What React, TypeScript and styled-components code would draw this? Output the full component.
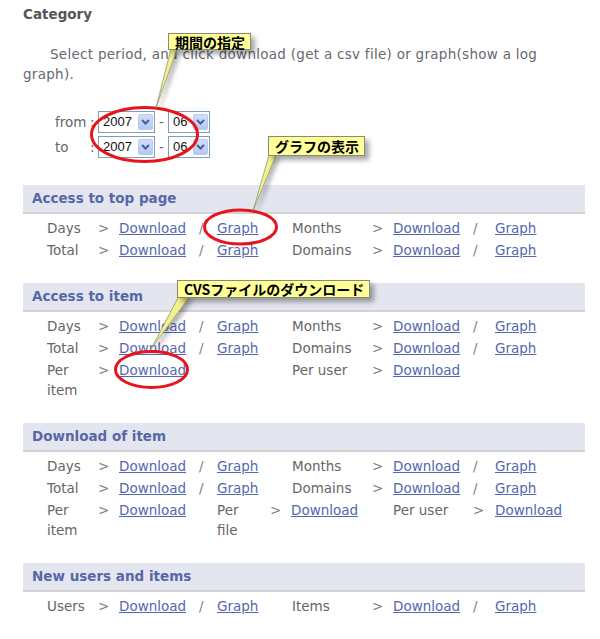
import React from "react";
import styled, { createGlobalStyle } from "styled-components";

const GlobalStyle = createGlobalStyle`
  html, body { margin: 0; padding: 0; background: #fff; }
  body { font-family: "DejaVu Sans", Verdana, sans-serif; }
`;

const Page = styled.div`
  position: relative;
  width: 600px;
  height: 639px;
  overflow: hidden;
  box-sizing: border-box;
  padding: 4px 15px 0 23px;
  font-family: "DejaVu Sans", Verdana, sans-serif;
  font-size: 13.5px;
  color: #666;
`;

const Title = styled.h2`
  margin: 0;
  font-size: 13.5px;
  line-height: 20px;
  font-weight: bold;
  color: #555;
`;

const Intro = styled.p`
  margin: 20px 0 0;
  line-height: 20px;
  text-indent: 27px;
  letter-spacing: 0.28px;
  color: #686870;
`;

const PeriodForm = styled.div`
  margin-top: 25px;
  padding-left: 32px;
  display: flex;
  flex-direction: column;
`;

const PeriodRow = styled.div`
  display: flex;
  align-items: center;
  height: 25px;
`;

const PeriodLabel = styled.span`
  width: 35px;
  color: #666;
`;

const Colon = styled.span`
  width: 8px;
  color: #666;
`;

const Dash = styled.span`
  width: 13px;
  text-align: center;
  color: #666;
`;

const SelectBox = styled.div<{ $w: number }>`
  display: inline-flex;
  align-items: center;
  justify-content: space-between;
  width: ${(p) => p.$w}px;
  height: 22px;
  box-sizing: border-box;
  border: 1px solid #7f9db9;
  background: #fff;
  padding: 0 1px 0 4px;
  font-family: "Liberation Sans", Arial, sans-serif;
  font-size: 13px;
  color: #111;
`;

const DropButton = styled.span`
  display: inline-flex;
  align-items: center;
  justify-content: center;
  width: 15px;
  height: 16px;
  box-sizing: border-box;
  border: 1px solid #b6c9f3;
  border-radius: 2px;
  background: linear-gradient(#d0defd, #b3c8f6);
`;

const Section = styled.section<{ $first?: boolean }>`
  margin-top: ${(p) => (p.$first ? 26 : 22)}px;
`;

const SectionHeader = styled.h3`
  margin: 0;
  height: 27px;
  line-height: 27px;
  padding-left: 9px;
  background: #e3e6ee;
  border-bottom: 2px solid #d2d2d6;
  font-size: 13.5px;
  font-weight: bold;
  color: #5767a8;
`;

const Rows = styled.div`
  padding: 3px 0 0 24px;
`;

const Row = styled.div<{ $cols: string }>`
  display: grid;
  grid-template-columns: ${(p) => p.$cols};
  line-height: 20px;
  padding: 1px 0;
`;

const Label = styled.span<{ $pr?: number }>`
  color: #666;
  padding-right: ${(p) => p.$pr ?? 0}px;
`;

const Sep = styled.span`
  color: #808080;
`;

const Link = styled.a`
  color: #5467b0;
  text-decoration: underline;
  justify-self: start;
  cursor: pointer;
`;

const Overlay = styled.svg`
  position: absolute;
  left: 0;
  top: 0;
  pointer-events: none;
`;

const Callout = styled.div<{ $x: number; $y: number; $h: number }>`
  position: absolute;
  left: ${(p) => p.$x}px;
  top: ${(p) => p.$y}px;
  height: ${(p) => p.$h}px;
  box-sizing: border-box;
  padding: 0 5px 0 6px;
  display: flex;
  align-items: center;
  white-space: nowrap;
  background: #ffff99;
  border: 1px solid #8a8a70;
  box-shadow: 4px 4px 5px rgba(0, 0, 0, 0.35);
  font-family: "Noto Sans CJK JP", sans-serif;
  font-weight: bold;
  font-size: 14px;
  color: #000;
`;

const NORMAL = "51px 21px 80px 18px 75px 80px 21px 80px 22px 1fr";
const SPECIAL = "51px 21px 98px 53px 21px 102px 80px 22px 1fr";

const Chevron = () => (
  <svg width="9" height="6" viewBox="0 0 9 6">
    <path d="M1 1 L4.5 4.5 L8 1" fill="none" stroke="#4a5f8c" strokeWidth="2" />
  </svg>
);

const Select = ({ value, w }: { value: string; w: number }) => (
  <SelectBox $w={w}>
    <span>{value}</span>
    <DropButton>
      <Chevron />
    </DropButton>
  </SelectBox>
);

type Entry = { label: string; graph?: boolean } | null;

const Pair = ({ e }: { e: Entry }) =>
  e ? (
    <>
      <Label>{e.label}</Label>
      <Sep>&gt;</Sep>
      <Link>Download</Link>
      {e.graph ? <Sep>/</Sep> : <span />}
      {e.graph ? <Link>Graph</Link> : <span />}
    </>
  ) : null;

const StdRow = ({ a, b }: { a: Entry; b: Entry }) => (
  <Row $cols={NORMAL}>
    <Pair e={a} />
    <Pair e={b} />
  </Row>
);

export default function App() {
  return (
    <>
      <GlobalStyle />
      <Page>
        <Title>Category</Title>
        <Intro>
          Select period, and click download (get a csv file) or graph(show a log graph).
        </Intro>
        <PeriodForm>
          <PeriodRow>
            <PeriodLabel>from</PeriodLabel>
            <Colon>:</Colon>
            <Select value="2007" w={57} />
            <Dash>-</Dash>
            <Select value="06" w={42} />
          </PeriodRow>
          <PeriodRow>
            <PeriodLabel>to</PeriodLabel>
            <Colon>:</Colon>
            <Select value="2007" w={57} />
            <Dash>-</Dash>
            <Select value="06" w={42} />
          </PeriodRow>
        </PeriodForm>

        <Section $first>
          <SectionHeader>Access to top page</SectionHeader>
          <Rows>
            <StdRow a={{ label: "Days", graph: true }} b={{ label: "Months", graph: true }} />
            <StdRow a={{ label: "Total", graph: true }} b={{ label: "Domains", graph: true }} />
          </Rows>
        </Section>

        <Section>
          <SectionHeader>Access to item</SectionHeader>
          <Rows>
            <StdRow a={{ label: "Days", graph: true }} b={{ label: "Months", graph: true }} />
            <StdRow a={{ label: "Total", graph: true }} b={{ label: "Domains", graph: true }} />
            <StdRow a={{ label: "Per item" }} b={{ label: "Per user" }} />
          </Rows>
        </Section>

        <Section>
          <SectionHeader>Download of item</SectionHeader>
          <Rows>
            <StdRow a={{ label: "Days", graph: true }} b={{ label: "Months", graph: true }} />
            <StdRow a={{ label: "Total", graph: true }} b={{ label: "Domains", graph: true }} />
            <Row $cols={SPECIAL}>
              <Label>Per item</Label>
              <Sep>&gt;</Sep>
              <Link>Download</Link>
              <Label $pr={10}>Per file</Label>
              <Sep>&gt;</Sep>
              <Link>Download</Link>
              <Label>Per user</Label>
              <Sep>&gt;</Sep>
              <Link>Download</Link>
            </Row>
          </Rows>
        </Section>

        <Section>
          <SectionHeader>New users and items</SectionHeader>
          <Rows>
            <StdRow a={{ label: "Users", graph: true }} b={{ label: "Items", graph: true }} />
          </Rows>
        </Section>

        <Overlay width="600" height="639" viewBox="0 0 600 639">
          <defs>
            <filter id="sh" x="-50%" y="-50%" width="200%" height="200%">
              <feDropShadow dx="3" dy="3" stdDeviation="2.5" floodColor="#000" floodOpacity="0.35" />
            </filter>
          </defs>
          <g fill="none" stroke="#e8141c" strokeWidth="3">
            <ellipse cx="144.5" cy="134.5" rx="53" ry="27" />
            <ellipse cx="240.5" cy="227" rx="36" ry="17" />
            <ellipse cx="151.5" cy="369.5" rx="36" ry="18" />
          </g>
          <g fill="#f2f28c" stroke="#8a8a6a" strokeWidth="0.7" filter="url(#sh)">
            <polygon points="171,49 177,49 156,108" />
            <polygon points="269,155 276,155 253,211" />
            <polygon points="179,296 190,296 151,349" />
          </g>
        </Overlay>

        <Callout $x={168} $y={33} $h={17}>期間の指定</Callout>
        <Callout $x={268} $y={136} $h={20}>グラフの表示</Callout>
        <Callout $x={177} $y={280} $h={18}>CVSファイルのダウンロード</Callout>
      </Page>
    </>
  );
}
